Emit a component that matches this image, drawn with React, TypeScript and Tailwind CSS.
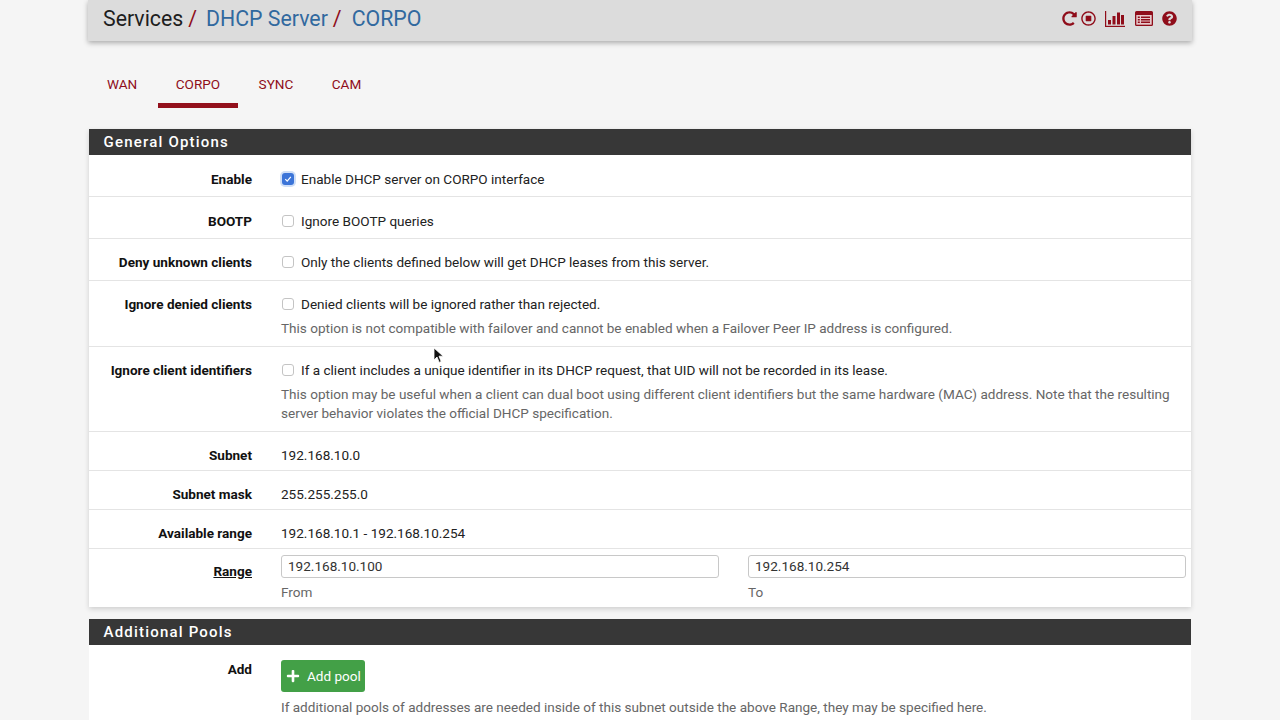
import type { ReactNode } from 'react'
import { FaPlus, FaQuestionCircle, FaRedoAlt, FaRegStopCircle } from 'react-icons/fa'

const tabs = ['WAN', 'CORPO', 'SYNC', 'CAM']

function Checkbox({ checked }: { checked?: boolean }) {
  if (checked) {
    return (
      <span className="ml-px mr-[7px] flex h-[12px] w-[12px] shrink-0 items-center justify-center rounded-[3px] bg-[#3b74d8] ring-[2px] ring-[#cfdff7]">
        <svg width="8" height="8" viewBox="0 0 8 8">
          <path d="M1.3 4.2 3.2 6.2 6.8 1.8" fill="none" stroke="#fff" strokeWidth="1.2" />
        </svg>
      </span>
    )
  }
  return <span className="ml-px mr-[7px] h-[12px] w-[12px] shrink-0 rounded-[3px] border border-[#c4c4c4] bg-white" />
}

function Row({ label, height, top = 'pt-[14px]', children }: { label: string; height: string; top?: string; children: ReactNode }) {
  return (
    <div className={`flex border-b border-[#e4e4e4] ${height} ${top}`}>
      <div className="w-[163px] shrink-0 text-right font-bold leading-[18px] text-[#111]">{label}</div>
      <div className="ml-[29px] min-w-0 flex-1 pr-[6px] leading-[18px]">{children}</div>
    </div>
  )
}

function CheckLine({ checked, children }: { checked?: boolean; children: ReactNode }) {
  return (
    <div className="flex items-center text-[#222]">
      <Checkbox checked={checked} />
      <span>{children}</span>
    </div>
  )
}

function Help({ children }: { children: ReactNode }) {
  return <p className="mt-[6px] leading-[19px] text-[#666]">{children}</p>
}

function PanelHeading({ title }: { title: string }) {
  return (
    <div className="flex h-[26px] items-center bg-[#373737] pl-[14.5px] text-[15px] font-medium tracking-[1.2px] text-white">
      {title}
    </div>
  )
}

function BarsIcon() {
  return (
    <svg className="ml-[9px]" width="20" height="16" viewBox="0 0 20 16" fill="currentColor">
      <rect x="0" y="0" width="1.2" height="16" />
      <rect x="0" y="14.8" width="20" height="1.2" />
      <rect x="3" y="9" width="3" height="4.5" />
      <rect x="7.5" y="5" width="3" height="8.5" />
      <rect x="12" y="1.5" width="3" height="12" />
      <rect x="16" y="4" width="3" height="9.5" />
    </svg>
  )
}

function ListIcon() {
  return (
    <svg className="ml-[10px]" width="18" height="15" viewBox="0 0 18 15" fill="currentColor">
      <path d="M1.5 0h15A1.5 1.5 0 0 1 18 1.5v12a1.5 1.5 0 0 1-1.5 1.5h-15A1.5 1.5 0 0 1 0 13.500v-12A1.500 1.500 0 0 1 1.500 0Z" />
      <rect x="1.300" y="4" width="15.400" height="9.700" fill="#e6c9cb" />
      <rect x="2.800" y="5.500" width="2" height="1.500" />
      <rect x="6" y="5.500" width="9" height="1.500" />
      <rect x="2.800" y="8" width="2" height="1.500" />
      <rect x="6" y="8" width="9" height="1.500" />
      <rect x="2.800" y="10.500" width="2" height="1.500" />
      <rect x="6" y="10.500" width="9" height="1.500" />
    </svg>
  )
}

export default function App() {
  return (
    <div className="relative h-[720px] overflow-hidden bg-[#f5f5f5] font-['Roboto',sans-serif] text-[13.55px]">
      <div className="mx-[88px] flex h-[41px] items-center justify-between bg-[#dcdcdc] pb-[4px] pl-[15px] pr-[15px] shadow-[0_2px_5px_rgba(0,0,0,0.3)]">
        <div className="flex items-baseline text-[21.3px] leading-[36px] text-[#1e1e1e]">
          <span>Services</span>
          <span className="ml-[5px] text-[#8f0d1a]">/</span>
          <span className="ml-[9px] text-[#31699f]">DHCP Server</span>
          <span className="ml-[5px] text-[#8f0d1a]">/</span>
          <span className="ml-[10px] text-[#31699f]">CORPO</span>
        </div>
        <div className="flex items-center text-[#8f0d1a]">
          <FaRedoAlt className="text-[15px]" />
          <FaRegStopCircle className="ml-[4px] text-[15px]" />
          <BarsIcon />
          <ListIcon />
          <FaQuestionCircle className="ml-[9px] text-[15px]" />
        </div>
      </div>

      <div className="mx-[89px] mt-[21px] flex h-[46px] gap-x-[2.5px] text-[#8f0d1a]">
        {tabs.map((tab) => (
          <div
            key={tab}
            className={`flex h-[46px] items-start px-[18px] pt-[13px] leading-[18px] ${tab === 'CORPO' ? 'border-b-[5px] border-[#93101c]' : ''}`}
          >
            {tab}
          </div>
        ))}
      </div>

      <div className="mx-[89px] mt-[21px] bg-white shadow-[0_2px_5px_rgba(0,0,0,0.16)]">
        <PanelHeading title="General Options" />
        <Row label="Enable" height="h-[42px]" top="pt-[15px]">
          <CheckLine checked>Enable DHCP server on CORPO interface</CheckLine>
        </Row>
        <Row label="BOOTP" height="h-[42px]" top="pt-[15px]">
          <CheckLine>Ignore BOOTP queries</CheckLine>
        </Row>
        <Row label="Deny unknown clients" height="h-[42px]">
          <CheckLine>Only the clients defined below will get DHCP leases from this server.</CheckLine>
        </Row>
        <Row label="Ignore denied clients" height="h-[66px]">
          <CheckLine>Denied clients will be ignored rather than rejected.</CheckLine>
          <Help>This option is not compatible with failover and cannot be enabled when a Failover Peer IP address is configured.</Help>
        </Row>
        <Row label="Ignore client identifiers" height="h-[85px]">
          <CheckLine>If a client includes a unique identifier in its DHCP request, that UID will not be recorded in its lease.</CheckLine>
          <Help>
            This option may be useful when a client can dual boot using different client identifiers but the same hardware (MAC) address. Note that the resulting server behavior violates the official DHCP specification.
          </Help>
        </Row>
        <Row label="Subnet" height="h-[39px]">
          <span className="text-[#222]">192.168.10.0</span>
        </Row>
        <Row label="Subnet mask" height="h-[39px]">
          <span className="text-[#222]">255.255.255.0</span>
        </Row>
        <Row label="Available range" height="h-[39px]">
          <span className="text-[#222]">192.168.10.1 - 192.168.10.254</span>
        </Row>
        <div className="flex h-[58px]">
          <div className="w-[163px] shrink-0 pt-[13px] text-right font-bold leading-[18px] text-[#111]">
            <span className="underline">Range</span>
          </div>
          <div className="ml-[29px] grid flex-1 grid-cols-2 gap-x-[29px] pr-[5px] pt-[6px]">
            {[
              { value: '192.168.10.100', hint: 'From' },
              { value: '192.168.10.254', hint: 'To' },
            ].map((field) => (
              <div key={field.hint}>
                <div className="flex h-[23px] items-center rounded-[3px] border border-[#c8c8c8] bg-white pl-[6px] text-[#333]">
                  {field.value}
                </div>
                <div className="mt-[5px] leading-[18px] text-[#666]">{field.hint}</div>
              </div>
            ))}
          </div>
        </div>
      </div>

      <div className="mx-[89px] mt-[12px] bg-white">
        <PanelHeading title="Additional Pools" />
        <div className="flex h-[100px]">
          <div className="w-[163px] shrink-0 pt-[15px] text-right font-bold leading-[18px] text-[#111]">Add</div>
          <div className="ml-[29px] flex-1 pr-[6px] pt-[15px]">
            <div className="flex h-[32px] w-[84px] items-center rounded-[3px] bg-[#43a047] pl-[5px] text-white">
              <FaPlus className="text-[14px]" />
              <span className="ml-[7px]">Add pool</span>
            </div>
            <p className="mt-[6px] leading-[19px] text-[#666]">
              If additional pools of addresses are needed inside of this subnet outside the above Range, they may be specified here.
            </p>
          </div>
        </div>
      </div>

      {/* mouse pointer from the recording */}
      <svg className="absolute left-[433px] top-[347px]" width="11" height="17" viewBox="0 0 11 17">
        <path d="M1 1v12l3-3 2.2 5.4 2-.9L6 9.2h4.2z" fill="#111" stroke="#fff" strokeWidth="0.8" />
      </svg>
    </div>
  )
}
